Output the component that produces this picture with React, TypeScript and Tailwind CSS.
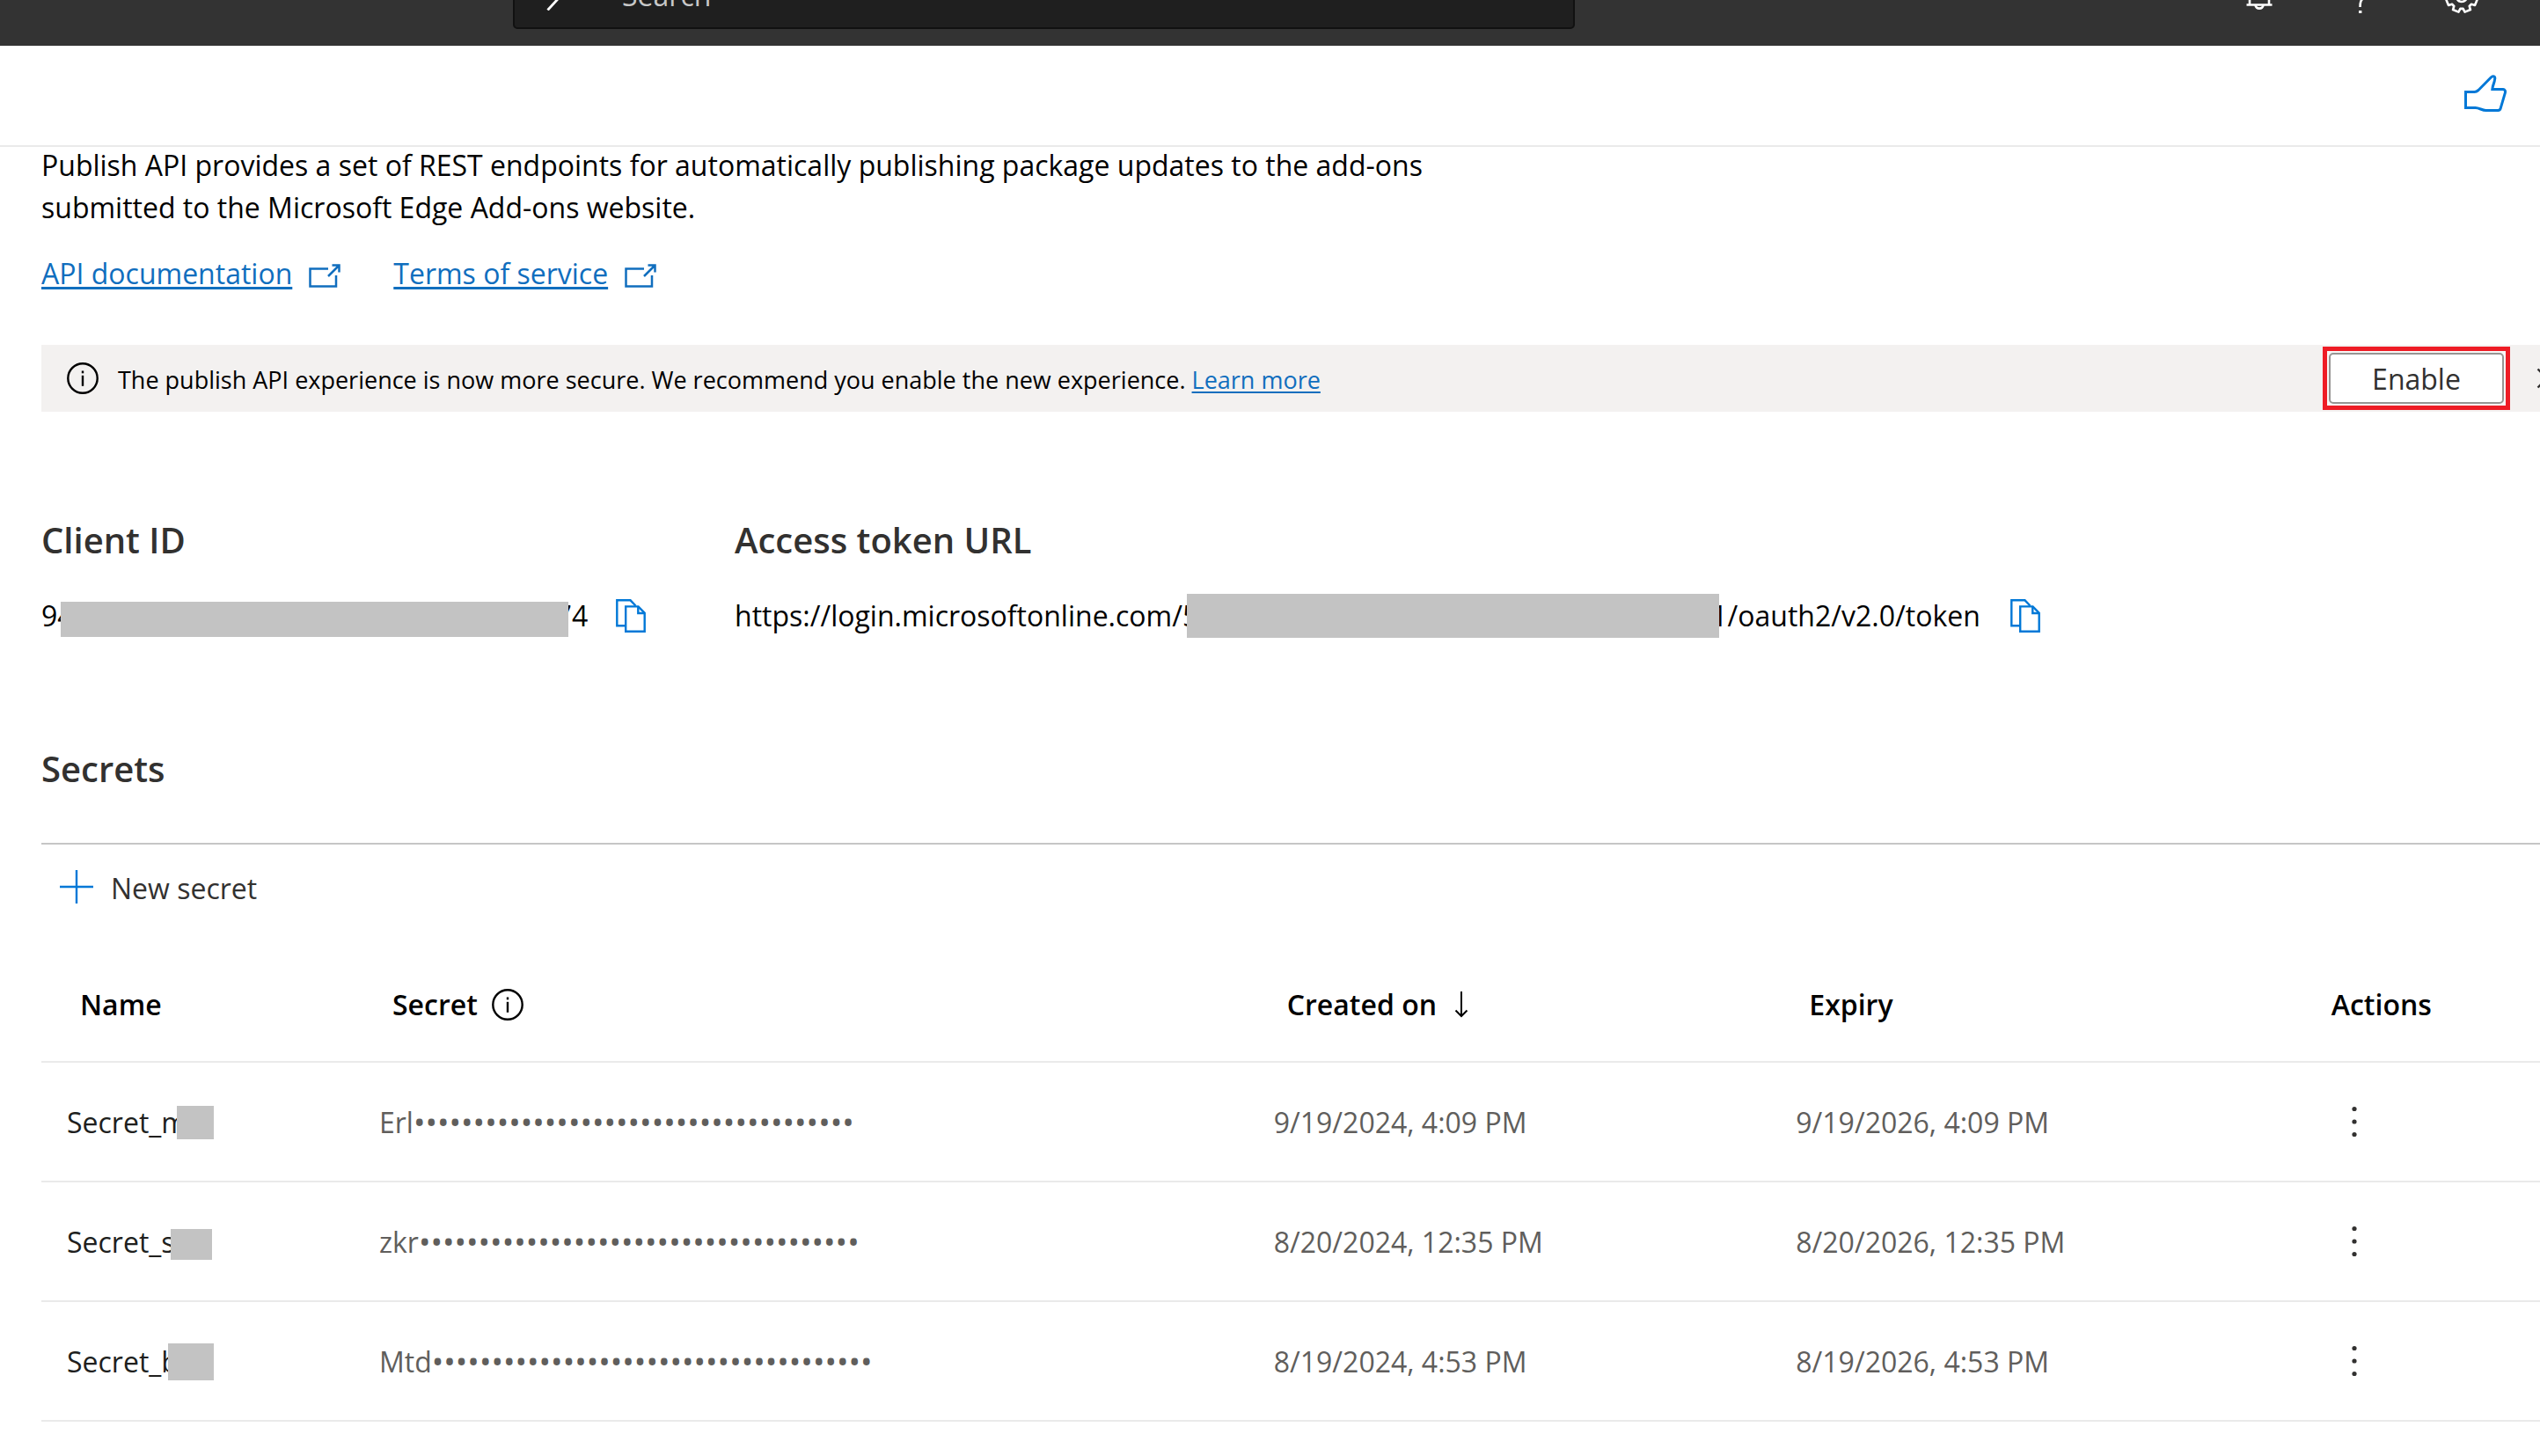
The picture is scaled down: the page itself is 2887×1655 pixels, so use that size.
import React from 'react';

type IconProps = { className?: string };

const GEAR_POINTS = Array.from({ length: 8 })
  .flatMap((_, i) => {
    const mid = 22.5 + i * 45;
    return [
      [mid - 16, 14],
      [mid - 11, 18],
      [mid + 11, 18],
      [mid + 16, 14],
    ];
  })
  .map(([deg, r]) => {
    const a = (deg * Math.PI) / 180;
    return `${(19 + r * Math.sin(a)).toFixed(2)},${(19 + r * Math.cos(a)).toFixed(2)}`;
  })
  .join(' ');

function SearchIcon() {
  return (
    <svg className="size-[34px] shrink-0" viewBox="0 0 34 34" fill="none" stroke="#fff" strokeWidth="2.8" aria-hidden="true">
      <circle cx="24" cy="9" r="8.5" />
      <path d="M18 15.5 L1.5 33.5" />
    </svg>
  );
}

function BellIcon() {
  return (
    <svg className="size-[38px]" viewBox="0 0 38 38" fill="none" stroke="#fff" strokeWidth="2.6" aria-hidden="true">
      <path d="M4.5 28.5 H33.5 M8 28 V14 a11 11 0 0 1 22 0 V28" />
      <path d="M14.5 29 a4.6 4.6 0 0 0 9 0" />
    </svg>
  );
}

function HelpIcon() {
  return (
    <svg className="size-[38px]" viewBox="0 0 38 38" fill="none" aria-hidden="true">
      <path d="M10 10 a9 8 0 1 1 13 10 C20 23 18.5 24 18.5 31" stroke="#fff" strokeWidth="2.6" />
      <rect x="17" y="35" width="3.4" height="3" fill="#fff" />
    </svg>
  );
}

function GearIcon() {
  return (
    <svg className="size-[38px]" viewBox="0 0 38 38" fill="none" stroke="#fff" strokeWidth="2.6" aria-hidden="true">
      <polygon points={GEAR_POINTS} strokeLinejoin="round" />
      <circle cx="19" cy="19" r="6" />
    </svg>
  );
}

function ThumbIcon() {
  return (
    <svg className="h-[42px] w-12" viewBox="0 0 48 42" fill="none" stroke="#0078d7" strokeWidth="3" aria-hidden="true">
      <path d="M1.5 19.5 H11.5 C13.5 19.5 14.5 18.8 16 17.5 L30.5 2.8 C32.5 0.6 35.6 2 34.6 5 C34.4 9 32 12 31.8 16.5 H44 C46 16.7 46.9 18.5 46.4 20.3 L41.2 38.2 C40.8 39.8 40 40.5 38.5 40.5 H24.5 C20 40.5 17 37.5 12.5 37.5 H1.5 Z" />
    </svg>
  );
}

function ExternalIcon() {
  return (
    <svg className="mt-1 h-[27px] w-9 shrink-0" viewBox="0 0 36 27" fill="none" stroke="#106ebe" strokeWidth="2.5" aria-hidden="true">
      <path d="M22 5.5 H1.5 V25.5 H31 V13" />
      <path d="M22 14 L34.5 1.5 M26.5 1.5 H34.5 V9.5" />
    </svg>
  );
}

function InfoIcon({ className = '' }: IconProps) {
  return (
    <svg className={`size-9 shrink-0 ${className}`} viewBox="0 0 36 36" aria-hidden="true">
      <circle cx="18" cy="18" r="16.7" fill="none" stroke="#000" strokeWidth="2.4" />
      <rect x="16.8" y="9.5" width="2.4" height="2.8" />
      <rect x="16.8" y="14.8" width="2.4" height="12" />
    </svg>
  );
}

function CopyIcon() {
  return (
    <svg className="h-[38px] w-[34px]" viewBox="0 0 34 38" fill="none" stroke="#0078d7" strokeWidth="2.4" aria-hidden="true">
      <path d="M10.5 30.2 H1.3 V1.3 H16.5 L22.5 7.5" />
      <path d="M11.2 8.4 H25.5 L32.7 15.8 V36.7 H11.2 Z" />
      <path d="M25.3 8.4 V16 H32.7" />
    </svg>
  );
}

function PlusIcon() {
  return (
    <svg className="size-[38px]" viewBox="0 0 38 38" stroke="#0078d7" strokeWidth="2.4" aria-hidden="true">
      <path d="M0 19 H38 M19 0 V38" />
    </svg>
  );
}

function CloseIcon() {
  return (
    <svg className="size-6" viewBox="0 0 24 24" stroke="#323130" strokeWidth="2.4" aria-hidden="true">
      <path d="M1.5 1.5 L22.5 22.5 M22.5 1.5 L1.5 22.5" />
    </svg>
  );
}

function SortIcon() {
  return (
    <svg className="h-[30px] w-4 shrink-0" viewBox="0 0 16 30" fill="none" stroke="#000" strokeWidth="2" aria-hidden="true">
      <path d="M8 0 V28 M1.5 21.5 L8 28 L14.5 21.5" />
    </svg>
  );
}

function MoreIcon() {
  return (
    <svg className="h-9 w-2" viewBox="0 0 8 36" fill="#323130" aria-hidden="true">
      <circle cx="4" cy="3.5" r="2.6" />
      <circle cx="4" cy="18" r="2.6" />
      <circle cx="4" cy="32.5" r="2.6" />
    </svg>
  );
}

const BULLETS = '•'.repeat(37);

const ROWS = [
  { name: 'Secret_m', mask: '-ml-3 h-[38px] w-[42px]', secret: 'Erl', created: '9/19/2024, 4:09 PM', expiry: '9/19/2026, 4:09 PM' },
  { name: 'Secret_s', mask: '-ml-[5px] mt-1 h-[35px] w-[47px]', secret: 'zkr', created: '8/20/2024, 12:35 PM', expiry: '8/20/2026, 12:35 PM' },
  { name: 'Secret_b', mask: '-ml-3 h-[42px] w-[52px]', secret: 'Mtd', created: '8/19/2024, 4:53 PM', expiry: '8/19/2026, 4:53 PM' },
];

const TH = 'h-[131px] border-b-2 border-[#eaeaea] p-0 pl-11 text-left font-semibold text-black';
const TD = 'h-[136px] border-b-2 border-[#eaeaea] p-0 pl-[29px] pt-[2px] text-[#605e5c]';

export default function App() {
  return (
    <div className="min-h-screen overflow-hidden bg-white font-['Open_Sans','Noto_Sans',sans-serif] text-[32px] leading-[48px] text-black">
      <header className="flex h-[52px] items-end overflow-hidden bg-[#333333] pb-[19px]">
        <label className="ml-[583px] mr-[720px] flex h-[77px] flex-1 items-center gap-[52px] rounded-[5px] border-2 border-[#111111] bg-[#1f1f1f] pl-9">
          <SearchIcon />
          <input
            type="search"
            aria-label="Search"
            placeholder="Search"
            className="min-w-0 flex-1 bg-transparent text-white outline-none placeholder:text-[#c8c8c8]"
          />
        </label>
        <nav className="flex shrink-0 pb-[18px] pr-8">
          <button type="button" aria-label="Notifications" className="flex w-[115px] justify-center"><BellIcon /></button>
          <button type="button" aria-label="Help" className="flex w-[115px] justify-center"><HelpIcon /></button>
          <button type="button" aria-label="Settings" className="flex w-[115px] justify-center"><GearIcon /></button>
        </nav>
      </header>

      <div className="flex h-[115px] items-center justify-end border-b-2 border-[#eaeaea] pb-[6px] pr-[38px]">
        <button type="button" aria-label="Send feedback"><ThumbIcon /></button>
      </div>

      <main className="-mt-[3px] pl-[47px]">
        <p className="max-w-[1600px]">
          Publish API provides a set of REST endpoints for automatically publishing package updates to the add-ons
          submitted to the Microsoft Edge Add-ons website.
        </p>

        <div className="mt-[27px] flex gap-[60px] text-[#106ebe]">
          <a href="#documentation" className="flex items-center gap-[19px]">
            <span className="underline decoration-[3px] underline-offset-[3px]">API documentation</span>
            <ExternalIcon />
          </a>
          <a href="#terms" className="flex items-center gap-[19px]">
            <span className="underline decoration-[3px] underline-offset-[3px]">Terms of service</span>
            <ExternalIcon />
          </a>
        </div>

        <section className="mt-[57px] flex h-[76px] items-center bg-[#f3f1f0] pl-[29px]">
          <InfoIcon />
          <p className="ml-[22px] flex-1 pt-[3px] text-[27px]">
            The publish API experience is now more secure. We recommend you enable the new experience.{' '}
            <a href="#learn-more" className="text-[#106ebe] underline decoration-2 underline-offset-[3px]">Learn more</a>
          </p>
          <div className="shrink-0 border-[5px] border-[#ee1c25] bg-[#f8f7f6] p-[2px]">
            <button type="button" className="h-[58px] w-[199px] rounded-[5px] border-2 border-[#979593] bg-white pt-[2px] text-[#323130]">
              Enable
            </button>
          </div>
          <button type="button" aria-label="Dismiss" className="-mr-5 ml-[30px] shrink-0"><CloseIcon /></button>
        </section>

        <div className="mt-[118px] grid grid-cols-[788px_1fr]">
          <section>
            <h2 className="text-[40px] font-semibold leading-[56px] text-[#323130]">Client ID</h2>
            <div className="mt-[34px] flex h-12 items-center">
              <span>94</span>
              <span className="relative -ml-[15px] h-10 w-[577px] self-end bg-[#c3c3c3]" />
              <span className="-ml-[14px]">74</span>
              <button type="button" aria-label="Copy client ID" className="ml-8"><CopyIcon /></button>
            </div>
          </section>
          <section>
            <h2 className="text-[40px] font-semibold leading-[56px] text-[#323130]">Access token URL</h2>
            <div className="mt-[34px] flex h-12 items-center">
              <span>https://login.microsoftonline.com/5</span>
              <span className="relative -ml-[13px] h-[50px] w-[605px] bg-[#c3c3c3]" />
              <span className="-ml-[9px]">1/oauth2/v2.0/token</span>
              <button type="button" aria-label="Copy access token URL" className="ml-[34px]"><CopyIcon /></button>
            </div>
          </section>
        </div>

        <section>
          <h2 className="mt-[122px] border-b-2 border-[#c6c6c6] pb-14 text-[40px] font-semibold leading-[56px] text-[#323130]">
            Secrets
          </h2>
          <button type="button" className="ml-[21px] mt-[26px] flex items-center gap-5 text-[#323130]">
            <span className="-mt-1"><PlusIcon /></span>
            New secret
          </button>

          <table className="mt-[43px] w-full table-fixed border-separate border-spacing-0">
            <colgroup>
              <col className="w-[12.5%]" />
              <col className="w-[35.8%]" />
              <col className="w-[20.9%]" />
              <col className="w-[20.9%]" />
              <col />
            </colgroup>
            <thead>
              <tr>
                <th scope="col" className={TH}>Name</th>
                <th scope="col" className={TH}>
                  <span className="flex items-center gap-4">Secret <InfoIcon /></span>
                </th>
                <th scope="col" className={TH}>
                  <button type="button" className="flex items-center gap-5 font-semibold">Created on <SortIcon /></button>
                </th>
                <th scope="col" className={TH}>Expiry</th>
                <th scope="col" className={TH}>Actions</th>
              </tr>
            </thead>
            <tbody>
              {ROWS.map((row) => (
                <tr key={row.name}>
                  <td className={TD}>
                    <span className="flex items-center text-[#201f1e]">
                      {row.name}
                      <span className={`relative bg-[#c3c3c3] ${row.mask}`} />
                    </span>
                  </td>
                  <td className={TD}>
                    <span className="flex items-center">
                      {row.secret}
                      <span className="text-[36px]">{BULLETS}</span>
                    </span>
                  </td>
                  <td className={TD}>{row.created}</td>
                  <td className={TD}>{row.expiry}</td>
                  <td className={TD}>
                    <button type="button" aria-label={`Actions for ${row.name}`} className="flex h-12 w-[82px] items-center justify-center pb-[2px]">
                      <MoreIcon />
                    </button>
                  </td>
                </tr>
              ))}
            </tbody>
          </table>
        </section>
      </main>
    </div>
  );
}
